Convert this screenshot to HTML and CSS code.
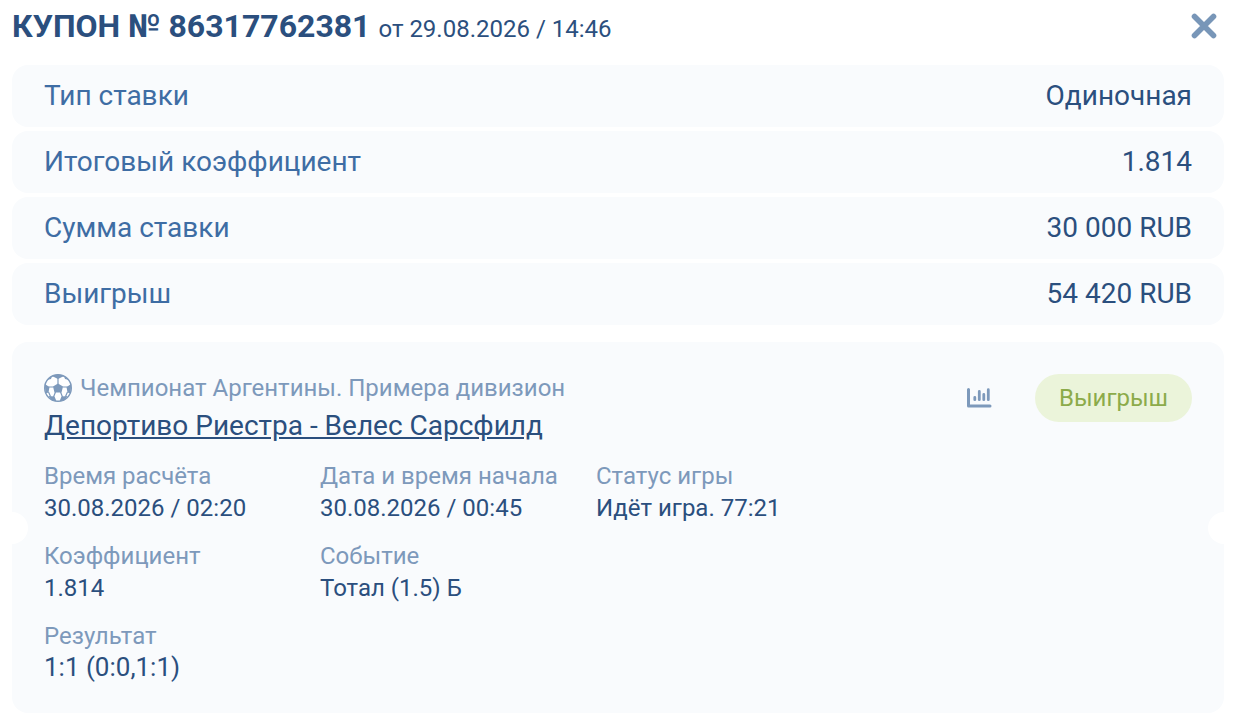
FILE: index.html
```html
<!DOCTYPE html>
<html lang="ru">
<head>
<meta charset="utf-8">
<title>Купон</title>
<link rel="stylesheet" href="styles.css">
</head>
<body>
<main class="coupon">
  <header class="header">
    <h1 class="title">КУПОН № 86317762381</h1>
    <span class="date">от 29.08.2026 / 14:46</span>
    <button class="close" aria-label="Закрыть"><svg width="26" height="26" viewBox="0 0 26 26"><path d="M3.500 3.500 22.500 22.500M22.500 3.500 3.500 22.500" fill="none" stroke="#7896b8" stroke-width="5.600" stroke-linecap="round"/></svg></button>
  </header>
  <dl class="summary">
    <div class="row"><dt class="label">Тип ставки</dt><dd class="value">Одиночная</dd></div>
    <div class="row"><dt class="label">Итоговый коэффициент</dt><dd class="value">1.814</dd></div>
    <div class="row"><dt class="label">Сумма ставки</dt><dd class="value">30 000 RUB</dd></div>
    <div class="row"><dt class="label">Выигрыш</dt><dd class="value">54 420 RUB</dd></div>
  </dl>
  <section class="event">
    <div class="event-head">
      <div class="event-name">
        <div class="league">
          <svg class="ball" width="28" height="28" viewBox="0 0 28 28"><circle cx="14" cy="14" r="13.300" fill="#fff" stroke="#7d99bb" stroke-width="1.400"/><path d="M14 9.500 19 12.500 17.500 18.500H10.500L9 12.500ZM8 2 14 5 20 2 14 .3ZM.8 10 5.500 13 4.500 18.500 1.500 19.500ZM27.200 10 22.500 13 23.500 18.500 26.500 19.500ZM4.500 22 10.500 22.500 12.500 27.300 8 26.800ZM23.500 22 17.500 22.500 15.500 27.300 20 26.800ZM3 6 8 2 7 5ZM25 6 20 2 21 5Z" fill="#7d99bb"/><path d="M14 4v6M4.500 13 9.500 13M23.500 13 18.500 13M11.500 18 9.500 23M16.500 18 18.500 23M4.500 18 6.500 22.500M23.500 18 21.500 22.500" stroke="#7d99bb" stroke-width="1.200"/></svg>
          <span class="league-name">Чемпионат Аргентины. Примера дивизион</span>
        </div>
        <a class="match">Депортиво Риестра - Велес Сарсфилд</a>
      </div>
      <svg class="chart" width="25" height="20" viewBox="0 0 25 20"><path d="M1.500 1.500V18H23" fill="none" stroke="#7d99bb" stroke-width="3" stroke-linecap="round" stroke-linejoin="round"/><path d="M7.800 9.500V11.700M12.300 3.500V11.700M16.800 6.500V11.700M21.300 1.700V11.700" fill="none" stroke="#7d99bb" stroke-width="2.800" stroke-linecap="round"/></svg>
      <span class="status">Выигрыш</span>
    </div>
    <dl class="details">
      <div><dt class="key">Время расчёта</dt><dd class="data">30.08.2026 / 02:20</dd></div>
      <div><dt class="key">Дата и время начала</dt><dd class="data">30.08.2026 / 00:45</dd></div>
      <div><dt class="key">Статус игры</dt><dd class="data">Идёт игра. 77:21</dd></div>
      <div><dt class="key">Коэффициент</dt><dd class="data">1.814</dd></div>
      <div class="wide"><dt class="key">Событие</dt><dd class="data">Тотал (1.5) Б</dd></div>
      <div><dt class="key">Результат</dt><dd class="data score">1:1 (0:0,1:1)</dd></div>
    </dl>
  </section>
</main>
</body>
</html>
```
FILE: styles.css
```css
* { box-sizing: border-box; }
body { margin: 0; background: #fff; color: #2b4f7e; font-family: Roboto, sans-serif; }
dl, dd, h1 { margin: 0; }
.coupon { padding: 0 14px 0 12px; }
.header { display: flex; align-items: baseline; height: 65px; padding-top: 7px; }
.title { font-size: 32px; line-height: 38px; font-weight: 700; white-space: nowrap; }
.date { margin-left: 8px; font-size: 24px; white-space: nowrap; }
.close { align-self: flex-start; margin: 6px 7px 0 auto; padding: 0; border: 0; background: none; line-height: 0; }
.summary { display: grid; gap: 4px; }
.row { display: flex; justify-content: space-between; align-items: center; height: 62px; padding: 0 32px 2px; border-radius: 16px; background: #f9fbfd; font-size: 28px; }
.label { color: #3e6da4; }
.event { position: relative; height: 371px; margin-top: 17px; padding: 30px 32px; border-radius: 16px; background: #f9fbfd; }
.event::before, .event::after { content: ""; position: absolute; top: 170px; width: 32px; height: 32px; border-radius: 50%; background: #fff; }
.event::before { left: -16px; }
.event::after { right: -16px; }
.event-head { display: flex; align-items: flex-start; }
.event-name { flex: 1; }
.league { display: flex; align-items: center; height: 32px; gap: 8px; color: #7d99bb; font-size: 24px; }
.match { display: block; margin-top: 4px; font-size: 28px; line-height: 36px; text-decoration: underline; }
.chart { margin: 16px 43px 0 0; }
.status { width: 157px; height: 48px; margin-top: 2px; border-radius: 24px; background: #ebf4da; color: #8cab4a; font-size: 24px; line-height: 48px; text-align: center; }
.details { display: grid; grid-template-columns: 276px 276px 1fr; row-gap: 16px; margin-top: 16px; font-size: 24px; line-height: 32px; }
.wide { grid-column: span 2; }
.key { color: #7d99bb; }
.score { font-size: 26px; line-height: 31px; }
```
